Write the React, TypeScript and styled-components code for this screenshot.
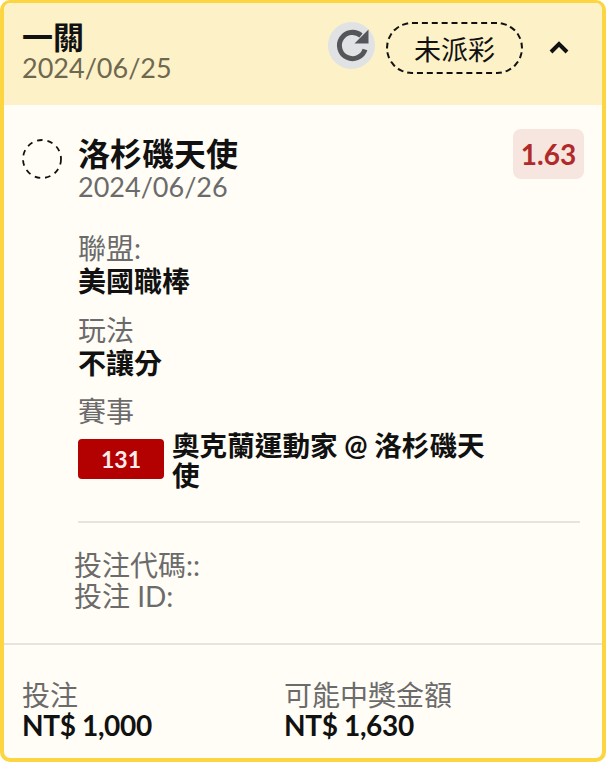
import { createGlobalStyle } from "styled-components";
import styled from "styled-components";

const GlobalStyle = createGlobalStyle`
  html, body {
    margin: 0;
    padding: 0;
    background: #ffffff;
    font-family: Lato, "Noto Sans CJK TC", sans-serif;
  }
`;

const Card = styled.div`
  box-sizing: border-box;
  width: 606px;
  height: 762px;
  border: 4px solid #fbd641;
  border-top-width: 3px;
  border-radius: 10px;
  background: #fffdf6;
  overflow: hidden;
  display: flex;
  flex-direction: column;
`;

const Header = styled.div`
  box-sizing: border-box;
  height: 102px;
  padding: 17px 32px 0 18px;
  background: #fdf1c8;
  display: flex;
  justify-content: space-between;
  align-items: flex-start;
`;

const HeaderTitle = styled.div`
  font-size: 31px;
  line-height: 34px;
  font-weight: 700;
  color: #111;
`;

const HeaderDate = styled.div`
  font-size: 27px;
  line-height: 28px;
  color: #6e6850;
`;

const HeaderActions = styled.div`
  display: flex;
  align-items: center;
  height: 52px;
  padding-top: 2px;
`;

const RefreshButton = styled.div`
  width: 47px;
  height: 47px;
  margin-top: -5px;
  border-radius: 50%;
  background: #e0e2e4;
  display: flex;
  align-items: center;
  justify-content: center;
`;

const StatusPill = styled.div`
  box-sizing: border-box;
  width: 137px;
  height: 52px;
  margin-left: 11px;
  border: 2px dashed #111;
  border-radius: 26px;
  display: flex;
  align-items: center;
  justify-content: center;
  font-size: 27px;
  color: #111;
`;

const Chevron = styled.svg`
  width: 22px;
  height: 16px;
  margin-left: 25px;
  margin-top: -2px;
`;

const Body = styled.div`
  box-sizing: border-box;
  height: 540px;
  padding: 21px 18px 0 18px;
  border-bottom: 2px solid #e6e4dd;
`;

const MatchRow = styled.div`
  display: flex;
  align-items: flex-start;
`;

const DashedCircle = styled.svg`
  width: 40px;
  height: 40px;
  margin-top: 13px;
  flex: none;
`;

const MatchInfo = styled.div`
  margin-left: 16px;
  padding-top: 10px;
  flex: 1;
`;

const MatchTitle = styled.div`
  font-size: 32px;
  line-height: 36px;
  font-weight: 700;
  color: #111;
`;

const MatchDate = styled.div`
  font-size: 27px;
  line-height: 30px;
  color: #6b6b6b;
`;

const OddsBadge = styled.div`
  width: 71px;
  height: 50px;
  margin-top: 3px;
  border-radius: 8px;
  background: #f7e5df;
  color: #b02a2a;
  font-size: 28px;
  font-weight: 700;
  display: flex;
  align-items: center;
  justify-content: center;
`;

const Details = styled.div`
  margin-left: 56px;
  padding-top: 30px;
`;

const DetailGroup = styled.div`
  margin-bottom: 15.5px;
`;

const DetailLabel = styled.div`
  font-size: 28px;
  line-height: 32px;
  color: #6b6b6b;
`;

const DetailValue = styled.div`
  font-size: 28px;
  line-height: 34px;
  font-weight: 700;
  color: #111;
`;

const EventRow = styled.div`
  display: flex;
  align-items: flex-start;
  width: 420px;
  padding-top: 4px;
`;

const EventCode = styled.div`
  flex: none;
  width: 86px;
  height: 40px;
  margin-top: 8px;
  border-radius: 4px;
  background: #b30000;
  color: #fdecec;
  font-size: 23px;
  font-weight: 700;
  display: flex;
  align-items: center;
  justify-content: center;
`;

const EventName = styled.div`
  margin-left: 8px;
  font-size: 27.6px;
  line-height: 30px;
  font-weight: 700;
  color: #111;
`;

const Divider = styled.hr`
  margin: 30px 4px 0 0;
  border: 0;
  border-top: 2px solid #e6e4dd;
`;

const Codes = styled.div`
  margin-top: 27px;
  margin-left: -4px;
  font-size: 28px;
  line-height: 31px;
  color: #6b6b6b;
`;

const Footer = styled.div`
  display: grid;
  grid-template-columns: 262px 1fr;
  padding: 34px 18px 0 18px;
`;

const FooterLabel = styled.div`
  font-size: 28px;
  line-height: 32px;
  color: #6b6b6b;
`;

const FooterValue = styled.div`
  font-size: 28px;
  line-height: 28px;
  font-weight: 700;
  letter-spacing: -0.35px;
  color: #111;
`;

export default function App() {
  return (
    <>
      <GlobalStyle />
      <Card>
        <Header>
          <div>
            <HeaderTitle>一關</HeaderTitle>
            <HeaderDate>2024/06/25</HeaderDate>
          </div>
          <HeaderActions>
            <RefreshButton>
              <svg width="36" height="36" viewBox="0 0 36 36">
                <path
                  d="M31 21.5 A13.1 13.1 0 1 1 27 7.5"
                  fill="none"
                  stroke="#555659"
                  strokeWidth="5"
                />
                <path d="M34.5 1.5 V15.5 H20.5 Z" fill="#555659" />
              </svg>
            </RefreshButton>
            <StatusPill>未派彩</StatusPill>
            <Chevron viewBox="0 0 22 16">
              <path
                d="M3 13 L11 5 L19 13"
                fill="none"
                stroke="#111"
                strokeWidth="4"
              />
            </Chevron>
          </HeaderActions>
        </Header>
        <Body>
          <MatchRow>
            <DashedCircle viewBox="0 0 40 40">
              <circle
                cx="20"
                cy="20"
                r="19"
                fill="none"
                stroke="#111"
                strokeWidth="1.8"
                strokeDasharray="5.5 5"
              />
            </DashedCircle>
            <MatchInfo>
              <MatchTitle>洛杉磯天使</MatchTitle>
              <MatchDate>2024/06/26</MatchDate>
            </MatchInfo>
            <OddsBadge>1.63</OddsBadge>
          </MatchRow>
          <Details>
            <DetailGroup>
              <DetailLabel>聯盟:</DetailLabel>
              <DetailValue>美國職棒</DetailValue>
            </DetailGroup>
            <DetailGroup>
              <DetailLabel>玩法</DetailLabel>
              <DetailValue>不讓分</DetailValue>
            </DetailGroup>
            <DetailLabel>賽事</DetailLabel>
            <EventRow>
              <EventCode>131</EventCode>
              <EventName>奧克蘭運動家 @ 洛杉磯天使</EventName>
            </EventRow>
            <Divider />
            <Codes>
              <div>投注代碼::</div>
              <div>投注 ID:</div>
            </Codes>
          </Details>
        </Body>
        <Footer>
          <div>
            <FooterLabel>投注</FooterLabel>
            <FooterValue>NT$ 1,000</FooterValue>
          </div>
          <div>
            <FooterLabel>可能中獎金額</FooterLabel>
            <FooterValue>NT$ 1,630</FooterValue>
          </div>
        </Footer>
      </Card>
    </>
  );
}
